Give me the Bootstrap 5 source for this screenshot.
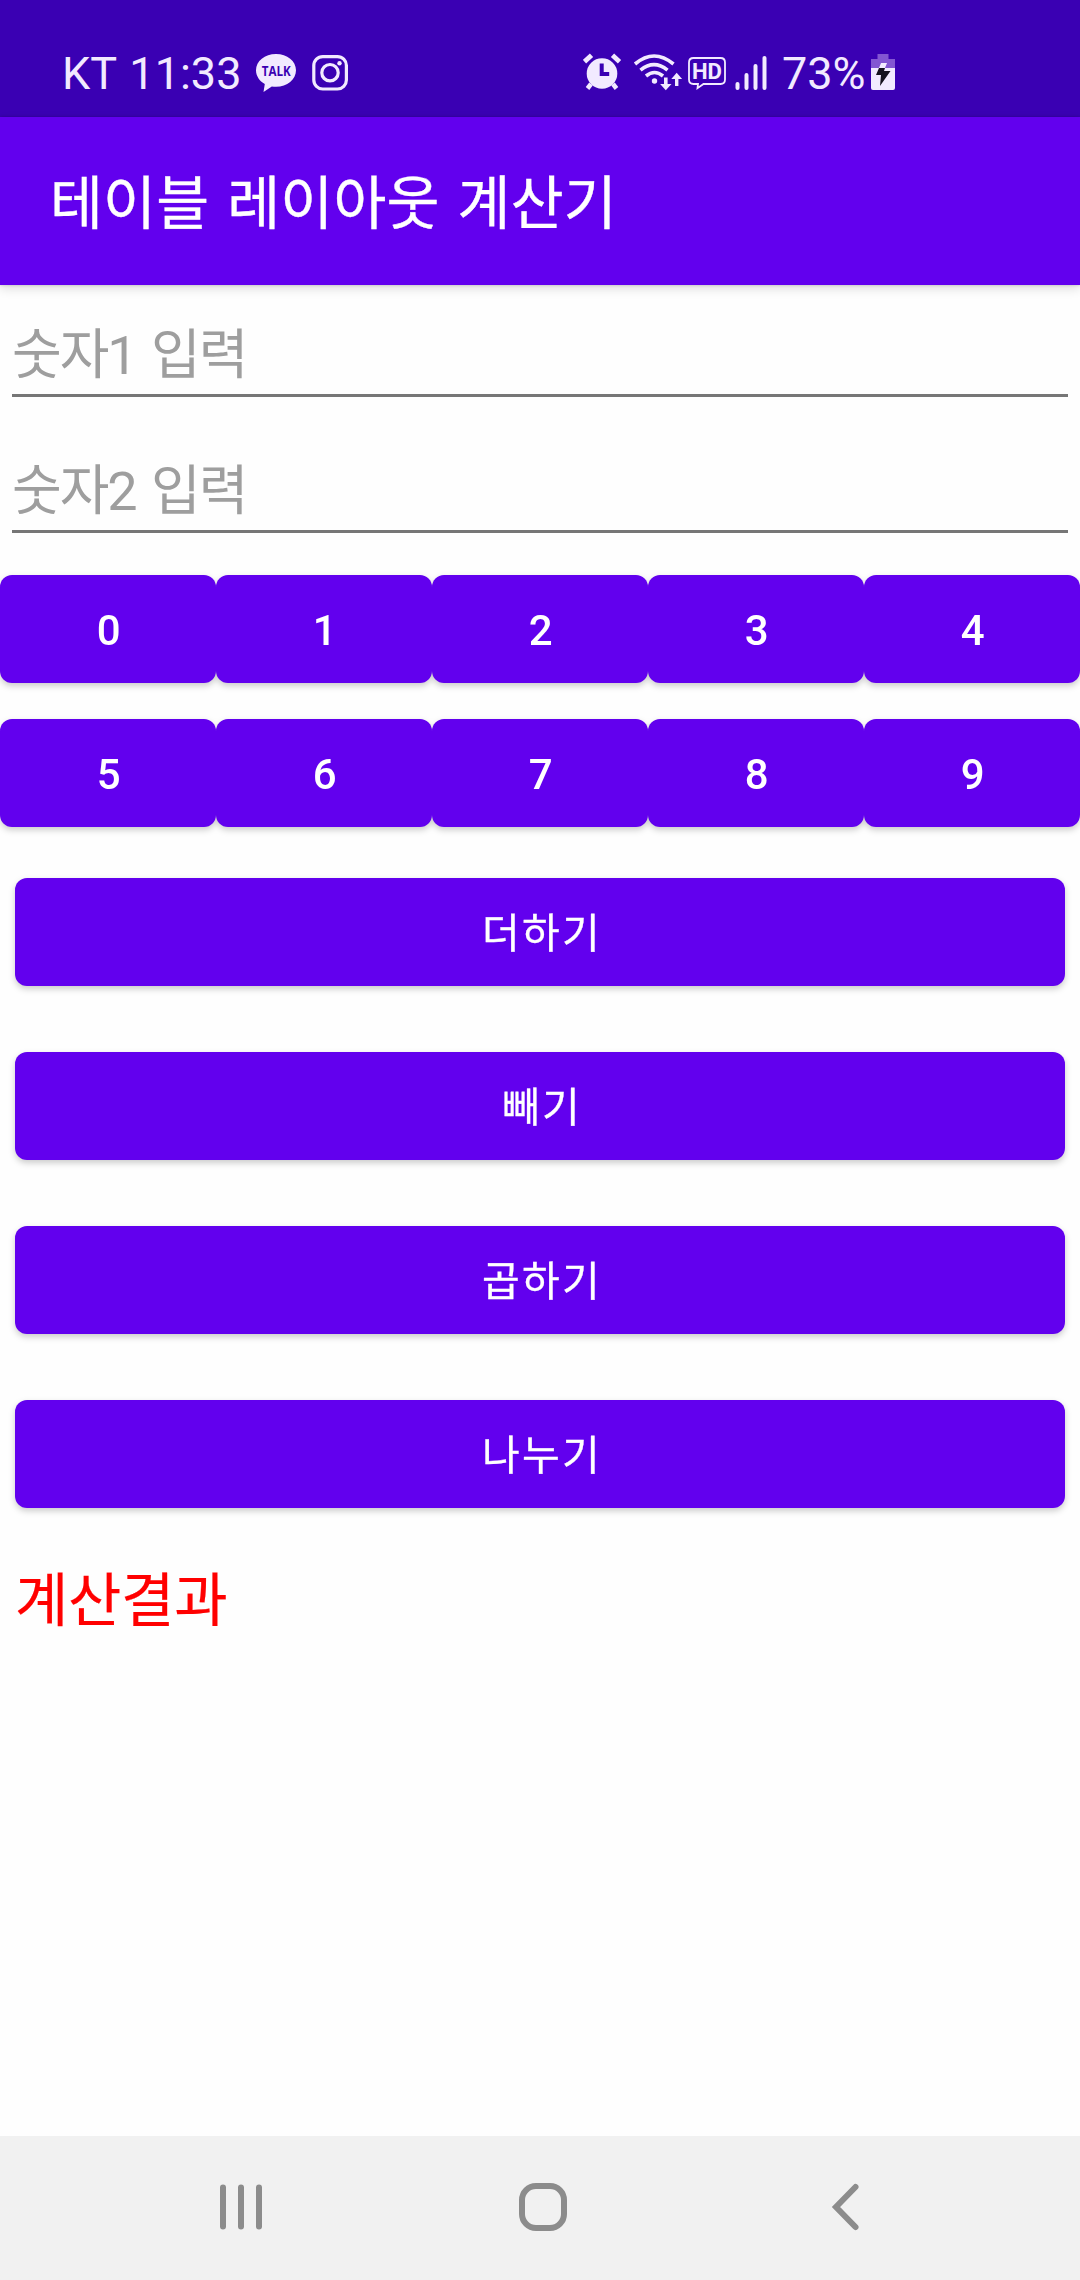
<!DOCTYPE html>
<html lang="ko">
<head>
<meta charset="utf-8">
<meta name="viewport" content="width=device-width, initial-scale=1">
<title>테이블 레이아웃 계산기</title>
<link href="https://cdn.jsdelivr.net/npm/bootstrap@5.3.0/dist/css/bootstrap.min.css" rel="stylesheet">
<style>
  body { font-family: Roboto, "Noto Sans CJK KR", sans-serif; background: #fefefe; width: 1080px; height: 2280px; }
  svg { display: block; flex: none; }
  .status-bar { height: 117px; background: #3a00b3; color: #f2eaff; padding: 52px 0 25px 62px; }
  .status-text { font-size: 45px; line-height: 44px; white-space: pre; word-spacing: 2px; }
  .status-left { width: 521px; }
  .gap-talk { margin-left: 13px; }
  .gap-insta { margin-left: 12px; }
  .gap-battery { margin-left: 3px; }
  .app-bar { height: 168px; background: #6200ee; padding: 7px 0 0 50px; z-index: 1; box-shadow: 0 4px 10px rgba(0,0,0,.12), 0 0 3px rgba(0,0,0,.2); }
  .app-title { font-size: 57.5px; line-height: 80px; font-weight: 400; -webkit-text-stroke: .4px #fff; word-spacing: 3.5px; letter-spacing: .2px; color: #fff; }
  .entry { height: 112px; padding: 31px 0 0; margin: 0 12px; width: 1056px; border: 0; border-bottom: 3px solid #767676; border-radius: 0; background: transparent; font-size: 54px; line-height: 80px; letter-spacing: -2px; word-spacing: 4px; }
  .entry::placeholder { color: #9e9e9e; opacity: 1; }
  .entry + .entry { margin-top: 24px; }
  .btn-calc { height: 108px; padding: 2px 0 0 5px; border: 0; border-radius: 12px; background: #6200ee; color: #fff; font-size: 42px; font-weight: 500; letter-spacing: 3.75px; }
  .btn-calc:hover { background: #5600d1; color: #fff; }
  .btn-op { font-size: 41px; font-weight: 400; -webkit-text-stroke: .3px #fff; letter-spacing: 2.2px; padding: 5px 0 0 4px; }
  .pad .row, .btn-op { filter: drop-shadow(0 3px 3px rgba(0,0,0,.2)); }
  .pad { margin-top: 42px; gap: 36px; }
  .ops { margin: 51px 15px 0; gap: 66px; }
  .result { margin: 51px 0 0 15px; font-size: 58px; line-height: 84px; letter-spacing: -.3px; color: #f00; -webkit-text-stroke: .2px #f00; }
  .nav-keys { height: 144px; background: #f1f1f1; padding: 0 216px 2px; }
  .key-home { margin-left: -4px; }
</style>
</head>
<body class="d-flex flex-column overflow-hidden">
<header class="status-bar d-flex flex-shrink-0">
  <div class="status-left d-flex">
    <span class="status-text">KT 11:33</span>
    <svg class="gap-talk" width="44" height="42" viewBox="255 52 44 42"><path d="M277 54c-11.200 0-20 7-20 16.300 0 5.800 3.500 10.800 8.800 13.800L264.500 92l8.300-5.600q2 .4 4.200.4c11.200 0 20-7.300 20-16.500S288.200 54 277 54z" fill="#f2eaff"/><text x="277.200" y="75.600" text-anchor="middle" font-family="Open Sans, sans-serif" font-weight="700" font-size="14" textLength="29" lengthAdjust="spacingAndGlyphs" fill="#3a00b3">TALK</text></svg>
    <svg class="gap-insta" width="40" height="40" viewBox="311 52 40 40" fill="none" stroke="#f2eaff" stroke-width="3.200"><rect x="314.800" y="56.600" width="32.600" height="32.400" rx="9"/><circle cx="331" cy="72.700" r="8.200"/><circle cx="340.500" cy="63.300" r="2.200" fill="#f2eaff" stroke="none"/></svg>
  </div>
  <svg width="199" height="42" viewBox="583 52 199 42" fill="#f2eaff">
    <circle cx="602" cy="73.500" r="15.300"/>
    <path d="M591 84l-3.500 4.500M613 84l3.500 4.500" stroke="#f2eaff" stroke-width="4.500"/>
    <path d="M584.500 61.700l7-6.400M619.500 61.700l-7-6.400" stroke="#f2eaff" stroke-width="4.800"/>
    <path d="M601.700 63.500v10.500h7.500" fill="none" stroke="#3a00b3" stroke-width="4"/>
    <g fill="none" stroke="#f2eaff" stroke-width="3.600"><path d="M635 64q19-16 38.500 0M640.500 70.200q13.500-11 27 0M646 76q8.500-7 17 0"/></g>
    <circle cx="654.500" cy="81" r="2.700"/>
    <path d="M664 77.500h3.600v6.500h3.900l-5.700 6.200-5.700-6.200h3.900zM675 86h3.400v-7h3.700l-5.400-6.300-5.400 6.300h3.700z"/>
    <path d="M693.500 58h27q4.500 0 4.500 4.500v17q0 4.500-4.500 4.500h-17l-6 4.200.5-4.200h-4.500q-4.500 0-4.500-4.500v-17q0-4.500 4.500-4.500z" fill="none" stroke="#f2eaff" stroke-width="1.800"/>
    <text x="707" y="78.500" text-anchor="middle" font-family="Roboto, sans-serif" font-size="22.500" font-weight="700" textLength="30" lengthAdjust="spacingAndGlyphs">HD</text>
    <g stroke="#f2eaff" stroke-width="4" stroke-linecap="round"><path d="M737.500 84v4M746.500 75v13M755.500 66v22M764.500 58v30"/></g>
  </svg>
  <span class="status-text">73%</span>
  <svg class="gap-battery" width="28" height="40" viewBox="869 52 28 40"><path d="M877.500 54h11v5h6.500v9h-24v-9h6.500z" fill="#8356d2"/><path d="M871 68h24v20q0 2-2 2h-20q-2 0-2-2z" fill="#f2eaff"/><path d="M881 63h6l-2 5h-6z" fill="#f2eaff"/><path d="M879 68h6l-1 3h6.500L880 86l1-11h-5z" fill="#15111e"/></svg>
</header>

<nav class="app-bar navbar flex-shrink-0 position-relative">
  <h1 class="app-title mb-0">테이블 레이아웃 계산기</h1>
</nav>

<main class="flex-grow-1 d-flex flex-column">
  <input class="entry form-control shadow-none" type="text" placeholder="숫자1 입력">
  <input class="entry form-control shadow-none" type="text" placeholder="숫자2 입력">

  <div class="pad d-flex flex-column">
    <div class="row row-cols-5 g-0">
      <div class="col"><button class="btn btn-calc w-100">0</button></div>
      <div class="col"><button class="btn btn-calc w-100">1</button></div>
      <div class="col"><button class="btn btn-calc w-100">2</button></div>
      <div class="col"><button class="btn btn-calc w-100">3</button></div>
      <div class="col"><button class="btn btn-calc w-100">4</button></div>
    </div>
    <div class="row row-cols-5 g-0">
      <div class="col"><button class="btn btn-calc w-100">5</button></div>
      <div class="col"><button class="btn btn-calc w-100">6</button></div>
      <div class="col"><button class="btn btn-calc w-100">7</button></div>
      <div class="col"><button class="btn btn-calc w-100">8</button></div>
      <div class="col"><button class="btn btn-calc w-100">9</button></div>
    </div>
  </div>

  <div class="ops d-grid">
    <button class="btn btn-calc btn-op">더하기</button>
    <button class="btn btn-calc btn-op">빼기</button>
    <button class="btn btn-calc btn-op">곱하기</button>
    <button class="btn btn-calc btn-op">나누기</button>
  </div>

  <p class="result">계산결과</p>
</main>

<footer class="nav-keys d-flex justify-content-between align-items-center flex-shrink-0">
  <svg width="50" height="54" viewBox="216 2180 50 54" stroke="#8c8c8c" stroke-width="6" stroke-linecap="round"><path d="M223 2187.500v39M241 2187.500v39M259 2187.500v39"/></svg>
  <svg class="key-home" width="54" height="54" viewBox="516 2180 54 54" fill="none" stroke="#8c8c8c" stroke-width="6"><rect x="522" y="2186" width="42" height="42" rx="14"/></svg>
  <svg width="40" height="54" viewBox="824 2180 40 54" fill="none" stroke="#8c8c8c" stroke-width="6" stroke-linecap="round"><path d="M855.500 2187l-19.500 20 19.500 20"/></svg>
</footer>
<script src="https://cdn.jsdelivr.net/npm/bootstrap@5.3.0/dist/js/bootstrap.bundle.min.js"></script>
</body>
</html>
